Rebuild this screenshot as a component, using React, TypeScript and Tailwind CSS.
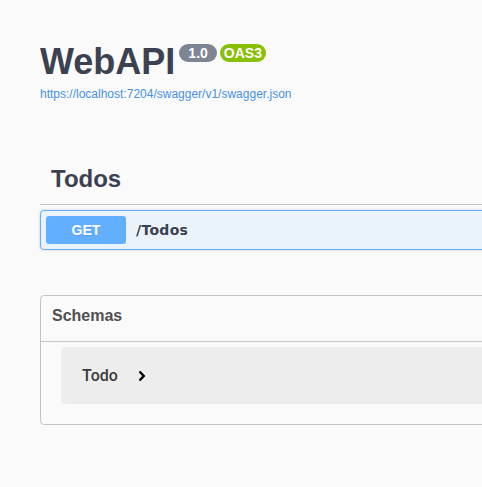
import React from "react";

export default function App() {
  return (
    <div
      className="w-[482px] h-[487px] overflow-hidden bg-[#fafafa]"
      style={{ fontFamily: '"Liberation Sans", Arial, sans-serif' }}
    >
      <div className="w-[1000px] pl-[40px]">
        {/* Info */}
        <div className="pt-[44px]">
          <div className="flex items-start">
            <h2 className="text-[36px] leading-[36px] font-bold text-[#3b4151]">WebAPI</h2>
            <span className="ml-[4px] h-[18px] px-[9px] rounded-full bg-[#7d8492] text-white text-[14px] font-bold leading-[18px]">
              1.0
            </span>
            <span className="ml-[3px] h-[18px] px-[4px] rounded-full bg-[#89bf04] text-white text-[14px] font-bold leading-[18px]">
              OAS3
            </span>
          </div>
          <a className="block mt-[6px] text-[12px] leading-[16px] text-[#4990e2]">
            https://localhost:7204/swagger/v1/swagger.json
          </a>
        </div>

        {/* Tag */}
        <div className="mt-[65px]">
          <div className="pl-[11px] pb-[10px] border-b border-[#c1c3c7]">
            <span className="text-[24px] leading-[24px] font-bold text-[#3b4151]">Todos</span>
          </div>
          <div className="mt-[5px] h-[40px] border border-[#61affe] rounded-[4px] bg-[#ebf3fa] shadow-[0_0_3px_rgba(0,0,0,0.19)] flex items-center px-[5px]">
            <div className="w-[80px] h-[28px] rounded-[3px] bg-[#61affe] text-white text-[14px] font-bold flex items-center justify-center [text-shadow:0_1px_0_rgba(0,0,0,0.1)]">
              GET
            </div>
            <span
              className="pl-[10px] text-[14px] font-bold text-[#3b4151] tracking-[0.3px]"
              style={{ fontFamily: '"DejaVu Sans", sans-serif' }}
            >
              /Todos
            </span>
          </div>
        </div>

        {/* Schemas */}
        <div className="mt-[45px] border border-[#c1c3c7] rounded-[4px] pb-[20px]">
          <div className="pl-[11px] pt-[10px] pb-[15px] border-b border-[#c1c3c7]">
            <h4 className="text-[16px] leading-[20px] font-bold text-[#505050]">Schemas</h4>
          </div>
          <div className="mt-[5px] ml-[20px] h-[57px] rounded-[4px] bg-[#ededed] flex items-center pl-[21px]">
            <span
              className="text-[16px] leading-[20px] font-medium text-[#3b3b3b]"
              style={{ fontFamily: 'Roboto, "Liberation Sans", sans-serif' }}
            >
              Todo
            </span>
            <svg className="ml-[20px]" width="8" height="12" viewBox="0 0 8 12">
              <polyline
                points="1.5,1.5 5.8,6 1.5,10.5"
                fill="none"
                stroke="#000"
                strokeWidth="2.4"
              />
            </svg>
          </div>
        </div>
      </div>
    </div>
  );
}
